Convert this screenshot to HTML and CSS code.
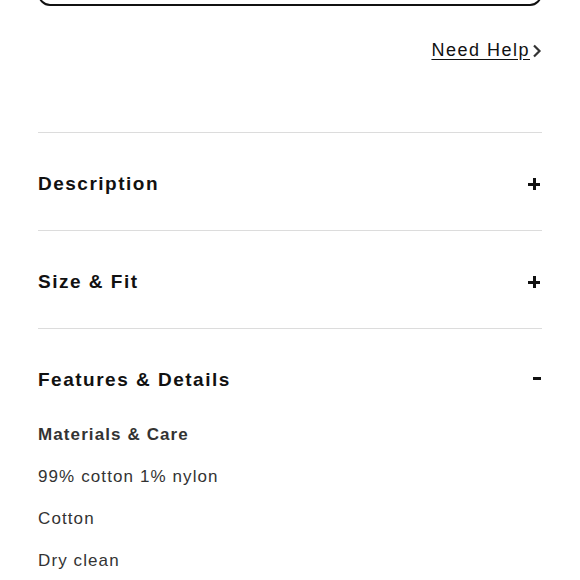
FILE: index.html
```html
<!DOCTYPE html>
<html>
<head>
<meta charset="utf-8">
<link rel="stylesheet" href="styles.css">
</head>
<body>
<div class="page">
  <div class="cart-btn"></div>
  <div class="help-row">
    <a class="help" href="#">Need Help</a>
    <svg class="chev" width="10" height="14" viewBox="0 0 10 14"><path d="M2 1.5 L7.5 7 L2 12.5" fill="none" stroke="#333" stroke-width="2.2"/></svg>
  </div>
  <div class="accordion">
    <div class="item">
      <div class="head"><span class="title">Description</span><span class="icon plus"></span></div>
    </div>
    <div class="item">
      <div class="head"><span class="title">Size &amp; Fit</span><span class="icon plus"></span></div>
    </div>
    <div class="item open">
      <div class="head"><span class="title">Features &amp; Details</span><span class="icon minus"></span></div>
      <div class="body">
        <div class="sub">Materials &amp; Care</div>
        <div class="line">99% cotton 1% nylon</div>
        <div class="line">Cotton</div>
        <div class="line">Dry clean</div>
      </div>
    </div>
  </div>
</div>
</body>
</html>
```
FILE: styles.css
```css
html, body {
  margin: 0;
  padding: 0;
  background: #fff;
  overflow: hidden;
}
.page {
  padding: 0 38px;
  font-family: "Liberation Sans", Arial, sans-serif;
  color: #111;
}
.cart-btn {
  height: 50px;
  margin-top: -48px;
  border: 2px solid #111;
  border-radius: 12px;
}
.help-row {
  display: flex;
  justify-content: flex-end;
  align-items: center;
  margin-top: 32px;
  height: 24px;
}
.help {
  font-size: 18px;
  letter-spacing: 1.5px;
  color: #111;
  text-decoration: underline;
  text-underline-offset: 3px;
}
.chev {
  margin-left: 2px;
  margin-top: 1px;
}
.accordion {
  margin-top: 70px;
}
.item {
  border-top: 1px solid #dcdcdc;
}
.head {
  display: flex;
  justify-content: space-between;
  align-items: center;
  height: 97px;
  padding-top: 4px;
  box-sizing: border-box;
}
.title {
  font-size: 19px;
  font-weight: bold;
  letter-spacing: 1.5px;
}
.icon {
  position: relative;
  width: 12px;
  height: 12px;
  margin-right: 2px;
}
.plus::before, .plus::after, .minus::before {
  content: "";
  position: absolute;
  background: #111;
}
.plus::before {
  left: 0; right: 0; top: 5px; height: 3px;
}
.plus::after {
  top: 0; bottom: 0; left: 4.5px; width: 3px;
}
.minus::before {
  left: 5px; right: -1px; top: 3px; height: 3px;
}
.body {
  margin-top: -1px;
}
.sub {
  font-size: 17px;
  font-weight: bold;
  color: #333;
  letter-spacing: 1.1px;
  height: 42px;
  line-height: 20px;
}
.line {
  font-size: 17px;
  color: #333;
  letter-spacing: 1.1px;
  height: 42px;
  line-height: 20px;
}
```
